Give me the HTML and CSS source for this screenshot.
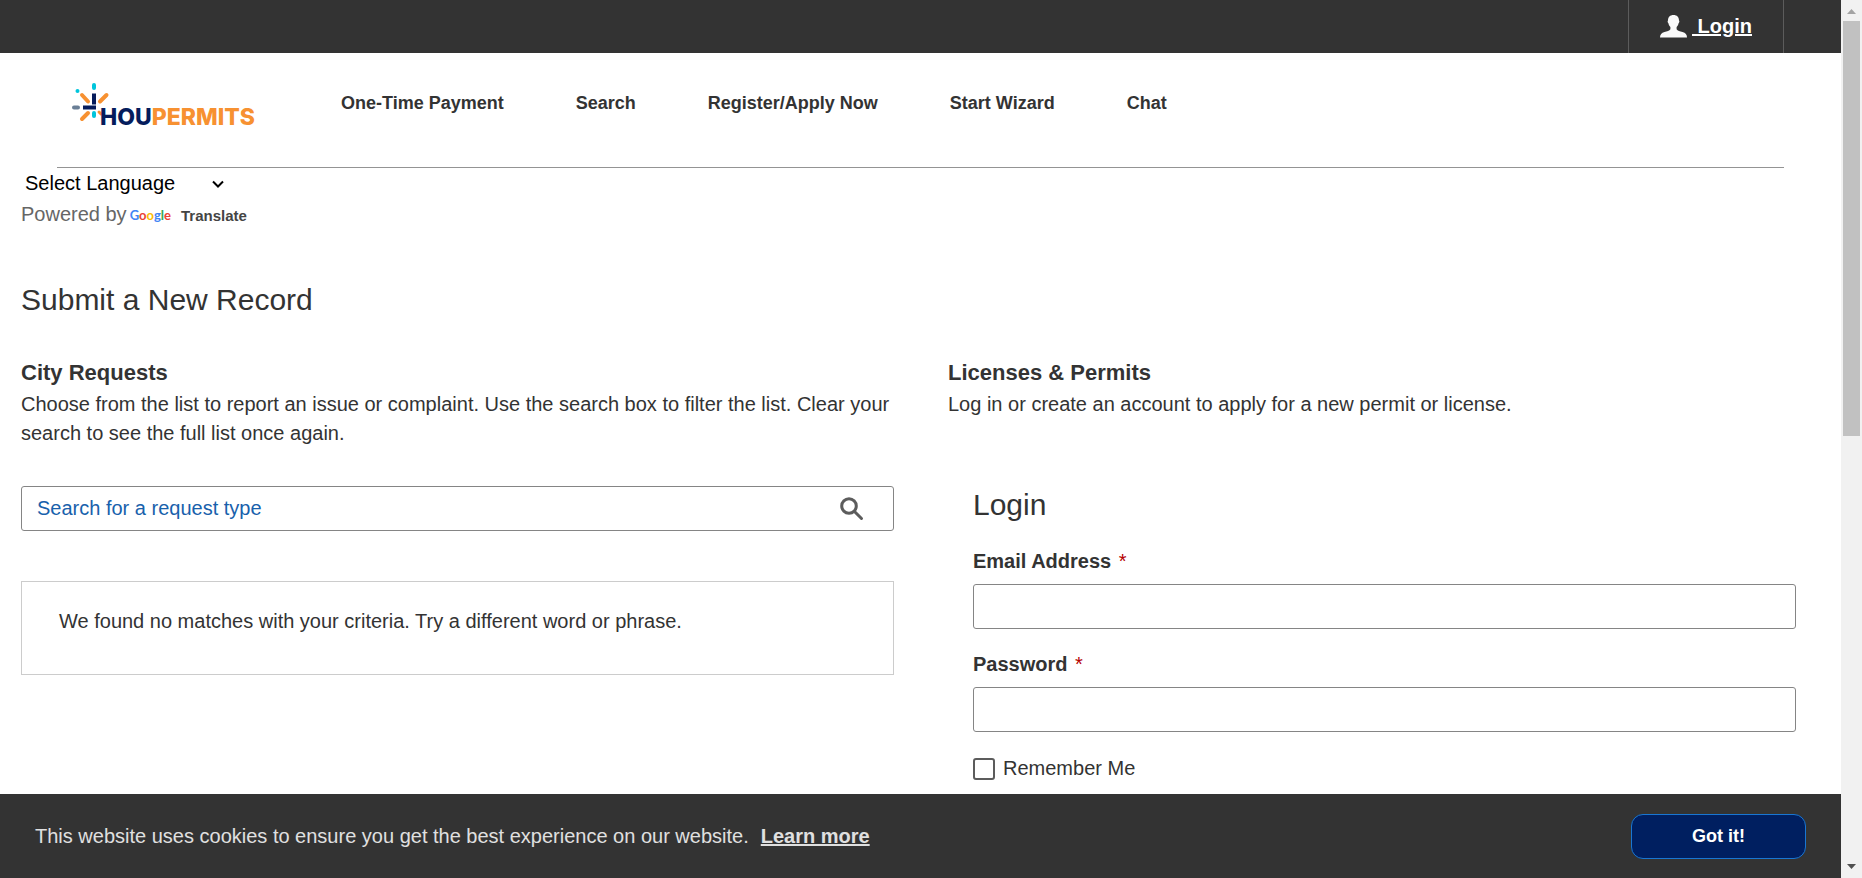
FILE: index.html
```html
<!DOCTYPE html>
<html lang="en">
<head>
<meta charset="utf-8">
<meta name="viewport" content="width=device-width, initial-scale=1">
<title>HouPermits</title>
<link rel="stylesheet" href="styles.css">
</head>
<body>
<div class="topbar">
  <a class="topbar-login" href="#login">
    <svg class="user-icon" viewBox="0 0 27 23" aria-hidden="true"><path fill="#fafafa" d="M13.500 0C17 0 19 2.200 19 5.500C19.600 6 19.500 7.600 18.600 8.200C18.200 10 17.500 11 16.600 11.900V14.200C17.500 15.700 20 16.200 22.500 17C25.500 18 27 19.500 27 22.500H0C0 19.500 1.500 18 4.500 17C7 16.200 9.500 15.700 10.400 14.200V11.900C9.500 11 8.800 10 8.400 8.200C7.500 7.600 7.400 6 8 5.500C8 2.200 10 0 13.500 0Z"/></svg>
    <span class="topbar-label">&nbsp;Login</span>
  </a>
</div>
<header class="header">
  <a class="logo" href="#home" aria-label="HouPermits home">
    <svg class="logo-art" viewBox="0 0 192 46" role="img" aria-label="HOUPERMITS">
      <g fill="none" stroke-width="4" stroke-linecap="round">
        <path stroke="#00c5dc" d="M22 3V6M22 31V34"/>
        <path stroke="#051c5c" stroke-linecap="butt" d="M22 11.500V22.500M11 25.500H24"/>
        <path stroke="#f79131" d="M10 13L16 19.500M34.500 13L28 19.500M16 31L10 37"/>
        <path stroke="#f79131" stroke-width="3" d="M27 30L29 32"/>
        <path stroke="#6a7f96" d="M2 25.500H6"/>
      </g>
      <circle cx="5.500" cy="9" r="2" fill="#00c5dc"/>
      <text class="logo-text" x="28" y="43"><tspan fill="#051c5c">HOU</tspan><tspan fill="#f79131">PERMITS</tspan></text>
    </svg>
  </a>
  <nav class="nav">
    <a href="#payment">One-Time Payment</a>
    <a href="#search">Search</a>
    <a href="#apply">Register/Apply Now</a>
    <a href="#wizard">Start Wizard</a>
    <a href="#chat">Chat</a>
  </nav>
</header>
<main class="page">
  <div class="translate">
    <div class="language">
      <select class="language-select" aria-label="Select Language"><option>Select Language</option></select>
      <svg class="chevron" viewBox="0 0 12 8" aria-hidden="true"><path d="M1 1.500L6 6.500L11 1.500" fill="none" stroke="#000" stroke-width="2"/></svg>
    </div>
    <div class="powered">Powered by
      <a class="translate-link" href="#translate"><span class="google"><span class="g-blue">G</span><span class="g-red">o</span><span class="g-yellow">o</span><span class="g-blue">g</span><span class="g-green">l</span><span class="g-red">e</span></span><span>Translate</span></a>
    </div>
  </div>
  <h1 class="title">Submit a New Record</h1>
  <div class="columns">
    <section>
      <h2 class="section-title">City Requests</h2>
      <p class="intro">Choose from the list to report an issue or complaint. Use the search box to filter the list. Clear your search to see the full list once again.</p>
      <div class="search">
        <input class="field search-field" type="text" placeholder="Search for a request type" aria-label="Search for a request type">
        <button class="search-button" type="button" aria-label="Search"><svg viewBox="0 0 24 24" aria-hidden="true"><g fill="none" stroke="#5c5c5c" stroke-width="3"><circle cx="9" cy="9" r="7.300"/><path stroke-linecap="round" d="M14.500 14.500L21.500 21.500"/></g></svg></button>
      </div>
      <div class="empty">We found no matches with your criteria. Try a different word or phrase.</div>
    </section>
    <section>
      <h2 class="section-title">Licenses &amp; Permits</h2>
      <p class="intro">Log in or create an account to apply for a new permit or license.</p>
      <form class="login" id="login">
        <h2 class="login-title">Login</h2>
        <label class="label" for="email">Email Address <span class="required">*</span></label>
        <input class="field" id="email" type="email">
        <label class="label" for="password">Password <span class="required">*</span></label>
        <input class="field" id="password" type="password">
        <div class="remember">
          <input class="checkbox" id="remember" type="checkbox">
          <label for="remember">Remember Me</label>
        </div>
      </form>
    </section>
  </div>
</main>
<div class="cookies">
  <p class="cookies-text">This website uses cookies to ensure you get the best experience on our website.<a class="cookies-link" href="#cookies">Learn more</a></p>
  <button class="accept" type="button">Got it!</button>
</div>
<div class="scrollbar" aria-hidden="true">
  <svg class="arrow" viewBox="0 0 21 21"><path fill="#a3a3a3" d="M6 14L10.500 9L15 14Z"/></svg>
  <div class="track"><div class="thumb"></div></div>
  <svg class="arrow" viewBox="0 0 21 21"><path fill="#505050" d="M6 7H15L10.500 12Z"/></svg>
</div>
</body>
</html>
```
FILE: styles.css
```css
* { box-sizing: border-box; }

html { height: 100%; overflow: hidden; }

body {
  height: 100%;
  margin: 0;
  padding-right: 21px;
  overflow: hidden;
  background: #fff;
  color: #333;
  font-family: "Liberation Sans", Arial, sans-serif;
  font-size: 20px;
  line-height: 29px;
}

h1, h2, p { margin: 0; }

.topbar {
  display: flex;
  justify-content: flex-end;
  height: 53px;
  padding-right: 57px;
  background: #333;
}

.topbar-login {
  display: flex;
  align-items: center;
  gap: 5px;
  padding: 0 31px;
  border: 1px solid #5c5c5c;
  border-width: 0 1px;
  color: #fff;
  font-weight: bold;
  text-decoration: none;
}

.user-icon { width: 27px; height: 23px; }
.topbar-label { text-decoration: underline; }

.header {
  display: flex;
  align-items: center;
  gap: 77px;
  height: 115px;
  margin: 0 57px;
  padding: 0 0 13px 15px;
  border-bottom: 1px solid #949494;
}

.logo { display: block; padding-top: 3px; }
.logo-art { display: block; width: 192px; height: 46px; overflow: visible; }
.logo-text { font-family: Inter, sans-serif; font-size: 23px; font-weight: 800; }

.nav { display: flex; gap: 72px; font-size: 18px; }
.nav a { color: #333; font-weight: bold; text-decoration: none; }

.page { padding: 0 20px 0 21px; }

.language { display: flex; align-items: center; height: 31px; }

.language-select {
  width: 207px;
  padding: 0 0 0 4px;
  border: 0;
  appearance: none;
  background: transparent;
  color: #000;
  font: inherit;
}

.chevron { width: 12px; height: 8px; margin-left: -16px; pointer-events: none; }

.powered { display: flex; gap: 3px; height: 31px; align-items: center; color: #666; }

.translate-link {
  display: flex;
  align-items: center;
  gap: 10px;
  padding-top: 2px;
  color: #444;
  font-size: 15px;
  font-weight: bold;
  text-decoration: none;
}

.google { font-family: Lato, sans-serif; font-size: 13px; }
.g-blue { color: #4285f4; }
.g-red { color: #ea4335; }
.g-yellow { color: #fbbc05; }
.g-green { color: #34a853; }

.title { margin-top: 52px; font-size: 30px; font-weight: normal; line-height: 36px; }

.columns { display: grid; grid-template-columns: 1fr 1fr; gap: 54px; margin-top: 40px; }

.section-title { font-size: 22px; line-height: 29px; }
.intro { margin-top: 3px; }

.search { position: relative; margin-top: 38px; }

.field {
  display: block;
  width: 100%;
  height: 45px;
  padding: 0 15px;
  border: 1px solid #858585;
  border-radius: 3px;
  background: #fff;
  color: #333;
  font: inherit;
}

.search-field { padding-right: 60px; }
.search-field::placeholder { color: #1861ac; opacity: 1; }

.search-button {
  position: absolute;
  top: 0;
  right: 28px;
  display: grid;
  place-items: center;
  width: 28px;
  height: 45px;
  padding: 0;
  border: 0;
  background: transparent;
}

.search-button svg { width: 24px; height: 24px; }

.empty { min-height: 94px; margin-top: 50px; padding: 25px 37px; border: 1px solid #ccc; }

.login { padding: 68px 25px 0; }
.login-title { font-size: 30px; font-weight: normal; line-height: 36px; }
.label { display: block; margin-top: 21px; font-weight: bold; }
.label + .field { margin-top: 8px; }
.login-title + .label { margin-top: 24px; }
.required { margin-left: 2px; color: #b50000; font-weight: normal; }

.remember { display: flex; align-items: center; gap: 8px; margin-top: 22px; }

.checkbox {
  width: 22px;
  height: 22px;
  margin: 0;
  border: 2px solid #5c5c5c;
  border-radius: 3px;
  appearance: none;
  background: #fff;
}

.cookies {
  position: fixed;
  right: 21px;
  bottom: 0;
  left: 0;
  display: flex;
  align-items: center;
  justify-content: space-between;
  height: 84px;
  padding: 0 35px;
  background: #333;
  color: #e0e0e0;
}

.cookies-link { margin-left: 12px; color: inherit; font-weight: bold; }

.accept {
  width: 175px;
  height: 45px;
  border: 1px solid #1976d2;
  border-radius: 12px;
  background: #001f60;
  color: #fff;
  font: inherit;
  font-size: 18px;
  font-weight: bold;
}

.scrollbar {
  position: fixed;
  top: 0;
  right: 0;
  bottom: 0;
  display: flex;
  flex-direction: column;
  width: 21px;
  background: #f1f1f1;
}

.arrow { display: block; flex: none; width: 21px; height: 21px; }
.track { flex: 1; padding: 0 2px; }
.thumb { height: calc(50% - 3px); background: #c1c1c1; }
```
